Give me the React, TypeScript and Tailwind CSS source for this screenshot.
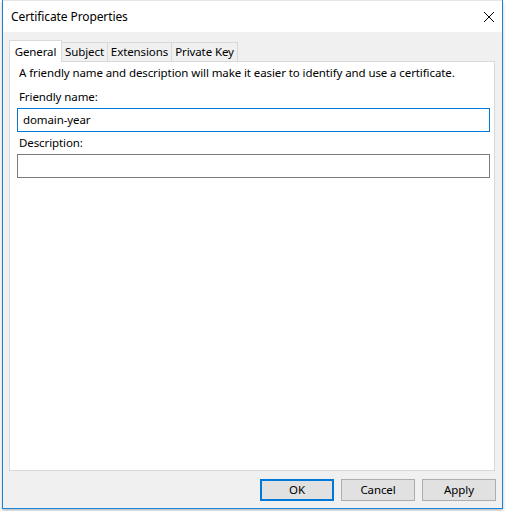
import React from 'react';

const font = { fontFamily: '"Noto Sans", "Liberation Sans", sans-serif' };

const tabs = [
  { label: 'General', w: 'w-[53px]' },
  { label: 'Subject', w: 'w-[46px]' },
  { label: 'Extensions', w: 'w-[64px]' },
  { label: 'Private Key', w: 'w-[66px]' },
];

const Button = ({ label, primary }: { label: string; primary?: boolean }) => (
  <button
    className={`w-[74px] h-[22px] bg-[#e1e1e1] text-[11.5px] text-black leading-none ${
      primary ? 'border-2 border-[#0078d7]' : 'border border-[#adadad]'
    }`}
  >
    {label}
  </button>
);

export default function App() {
  return (
    <div className="w-[506px] h-[511px] bg-white pl-[2px] tracking-[-0.1px]" style={font}>
      <div className="w-[501px] h-[509px] border-x border-b border-[#1883d7] bg-[#f0f0f0] flex flex-col shadow-[0_2px_3px_rgba(0,0,0,0.25)]">
        {/* title bar */}
        <div className="h-[32px] bg-white flex items-center justify-between pl-[8px] pr-[6px] border-t border-[#e5e5e5]">
          <span className="text-[12px] text-black mt-[1px]">Certificate Properties</span>
          <svg width="12" height="12" viewBox="0 0 12 12" className="mr-[1px]">
            <path d="M1 1L11 11M11 1L1 11" stroke="#000" strokeWidth="1" />
          </svg>
        </div>

        {/* tabs */}
        <div className="pt-[8px] pl-[6px] pr-[7px] flex flex-col flex-1">
          <div className="h-[21px] flex items-end relative z-10">
            {tabs.map((t, i) =>
              i === 0 ? (
                <div
                  key={t.label}
                  className={`${t.w} h-[22px] -mb-[1px] bg-white border-x border-t border-[#d9d9d9] text-[11.5px] text-black flex items-center justify-center`}
                >
                  {t.label}
                </div>
              ) : (
                <div
                  key={t.label}
                  className={`${t.w} h-[19px] bg-[#f0f0f0] border-t border-r border-[#d9d9d9] text-[11.5px] text-black flex items-center justify-center`}
                >
                  {t.label}
                </div>
              )
            )}
          </div>

          {/* panel */}
          <div className="h-[410px] bg-white border border-[#d9d9d9] pl-[7px] pr-[4px] flex flex-col text-[11.5px] text-black">
            <div className="mt-[2px] h-[18px] leading-[18px] pl-[2px]">
              A friendly name and description will make it easier to identify and use a certificate.
            </div>
            <div className="mt-[6px] h-[18px] leading-[18px] pl-[2px]">Friendly name:</div>
            <div className="mt-[2px] h-[24px] border border-[#0078d7] flex items-center pl-[5px]">domain-year</div>
            <div className="mt-[2px] h-[18px] leading-[18px] pl-[2px]">Description:</div>
            <div className="mt-[2px] h-[24px] border border-[#7a7a7a]"></div>
          </div>

          {/* buttons */}
          <div className="mt-[8px] h-[22px] flex justify-end gap-[7px] -mr-[1px]">
            <Button label="OK" primary />
            <Button label="Cancel" />
            <Button label="Apply" />
          </div>
        </div>
      </div>
    </div>
  );
}
